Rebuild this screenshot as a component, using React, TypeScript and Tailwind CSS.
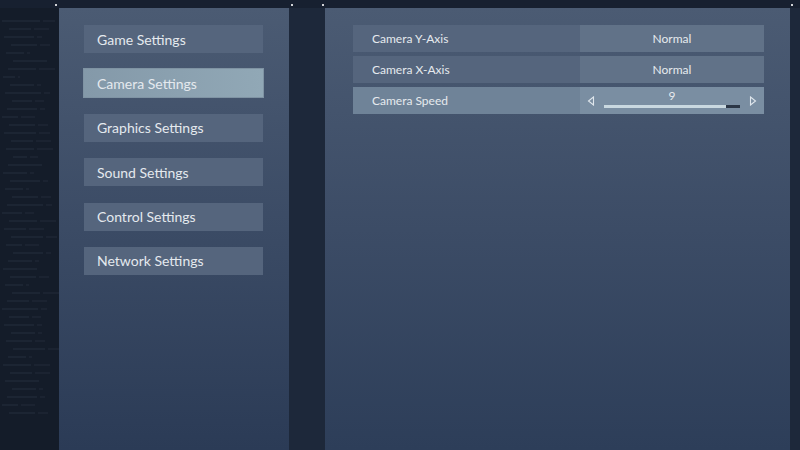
import React from "react";

const menu = ["Game Settings", "Camera Settings", "Graphics Settings", "Sound Settings", "Control Settings", "Network Settings"];

// faint "log" lines down the left edge
const noise = [38, 22, 30, 26, 18, 34, 28, 12, 24, 36, 20, 30, 16, 26, 32, 22, 28, 14, 34, 24, 30, 18, 26, 36, 20, 28, 22, 32, 16, 30, 24, 34, 26, 18, 28, 22, 36, 20, 30, 24, 26, 32, 18, 28, 22, 34, 24, 30, 16, 26];

function SideNoise() {
  return (
    <div className="flex w-[59px] shrink-0 flex-col gap-[6px] pt-[12px] pl-[2px]">
      {noise.map((w, i) => (
        <div key={i} className="flex gap-[3px]" style={{ marginLeft: (i * 7) % 12 }}>
          <div className="h-[2px] bg-[#222b3b] opacity-60" style={{ width: w }} />
          <div className="h-[2px] bg-[#1f2837] opacity-60" style={{ width: (w * 3) % 17 }} />
        </div>
      ))}
    </div>
  );
}

function Row({ label, value, active }: { label: string; value?: string; active?: boolean }) {
  return (
    <div className={`flex h-[27px] ${active ? "bg-[#6f8398]" : "bg-[#55657d]"}`}>
      <div className="flex w-[227px] items-center pl-[19px] text-[12px] text-[#e6eaee]">{label}</div>
      <div className={`flex flex-1 items-center justify-center text-[12px] text-[#e6eaee] ${active ? "bg-[#7a8ea2]" : "bg-[#617288]"}`}>
        {value ?? (
          <div className="flex w-full items-center px-[7px]">
            <svg width="8" height="10" viewBox="0 0 8 10" className="shrink-0">
              <path d="M6.5 1 L1.5 5 L6.5 9 Z" fill="none" stroke="#dfe6ec" strokeWidth="1.1" />
            </svg>
            <div className="flex flex-1 flex-col items-center px-[9px]">
              <span className="leading-[12px] mt-[-4px]">9</span>
              <div className="mt-[3px] flex h-[3px] w-full">
                <div className="h-full w-[90%] bg-[#c9d8e0]" />
                <div className="h-full flex-1 bg-[#2b3646]" />
              </div>
            </div>
            <svg width="8" height="10" viewBox="0 0 8 10" className="shrink-0">
              <path d="M1.5 1 L6.5 5 L1.5 9 Z" fill="none" stroke="#dfe6ec" strokeWidth="1.1" />
            </svg>
          </div>
        )}
      </div>
    </div>
  );
}

export default function App() {
  return (
    <div className="flex h-[450px] w-[800px] flex-col overflow-hidden bg-[#141c29] font-['Lato','Open_Sans',sans-serif]">
      <div className="relative h-[8px] shrink-0 bg-[#172030]">
        <span className="absolute left-[55px] top-[4px] h-[2px] w-[2px] bg-white/80" />
        <span className="absolute left-[291px] top-[4px] h-[2px] w-[2px] bg-white/80" />
        <span className="absolute left-[322px] top-[4px] h-[2px] w-[2px] bg-white/80" />
        <span className="absolute left-[791px] top-[4px] h-[2px] w-[2px] bg-white/80" />
      </div>
      <div className="flex flex-1">
        <SideNoise />
        <div className="flex w-[230px] shrink-0 flex-col gap-[16.4px] bg-gradient-to-b from-[#4b5b73] via-[#3b4b65] to-[#2b3b56] pt-[17px] pl-[25px] pr-[26px]">
          {menu.map((m) => (
            <div
              key={m}
              className={`flex h-[28px] items-center pl-[13px] text-[14px] text-[#e4e9ee] ${
                m === "Camera Settings" ? "bg-gradient-to-r from-[#8499a9] to-[#91a8b6] shadow-[0_0_0_1px_#7f93a3]" : "bg-[#55657d]"
              }`}
            >
              {m}
            </div>
          ))}
        </div>
        <div className="w-[36px] shrink-0 bg-[#1d283a]" />
        <div className="flex w-[465px] shrink-0 flex-col gap-[4px] bg-gradient-to-b from-[#4b5b73] via-[#3c4c66] to-[#2d3e59] pt-[17px] pl-[28px] pr-[26px]">
          <Row label="Camera Y-Axis" value="Normal" />
          <Row label="Camera X-Axis" value="Normal" />
          <Row label="Camera Speed" active />
        </div>
        <div className="flex-1 bg-[#1d283a]" />
      </div>
    </div>
  );
}
